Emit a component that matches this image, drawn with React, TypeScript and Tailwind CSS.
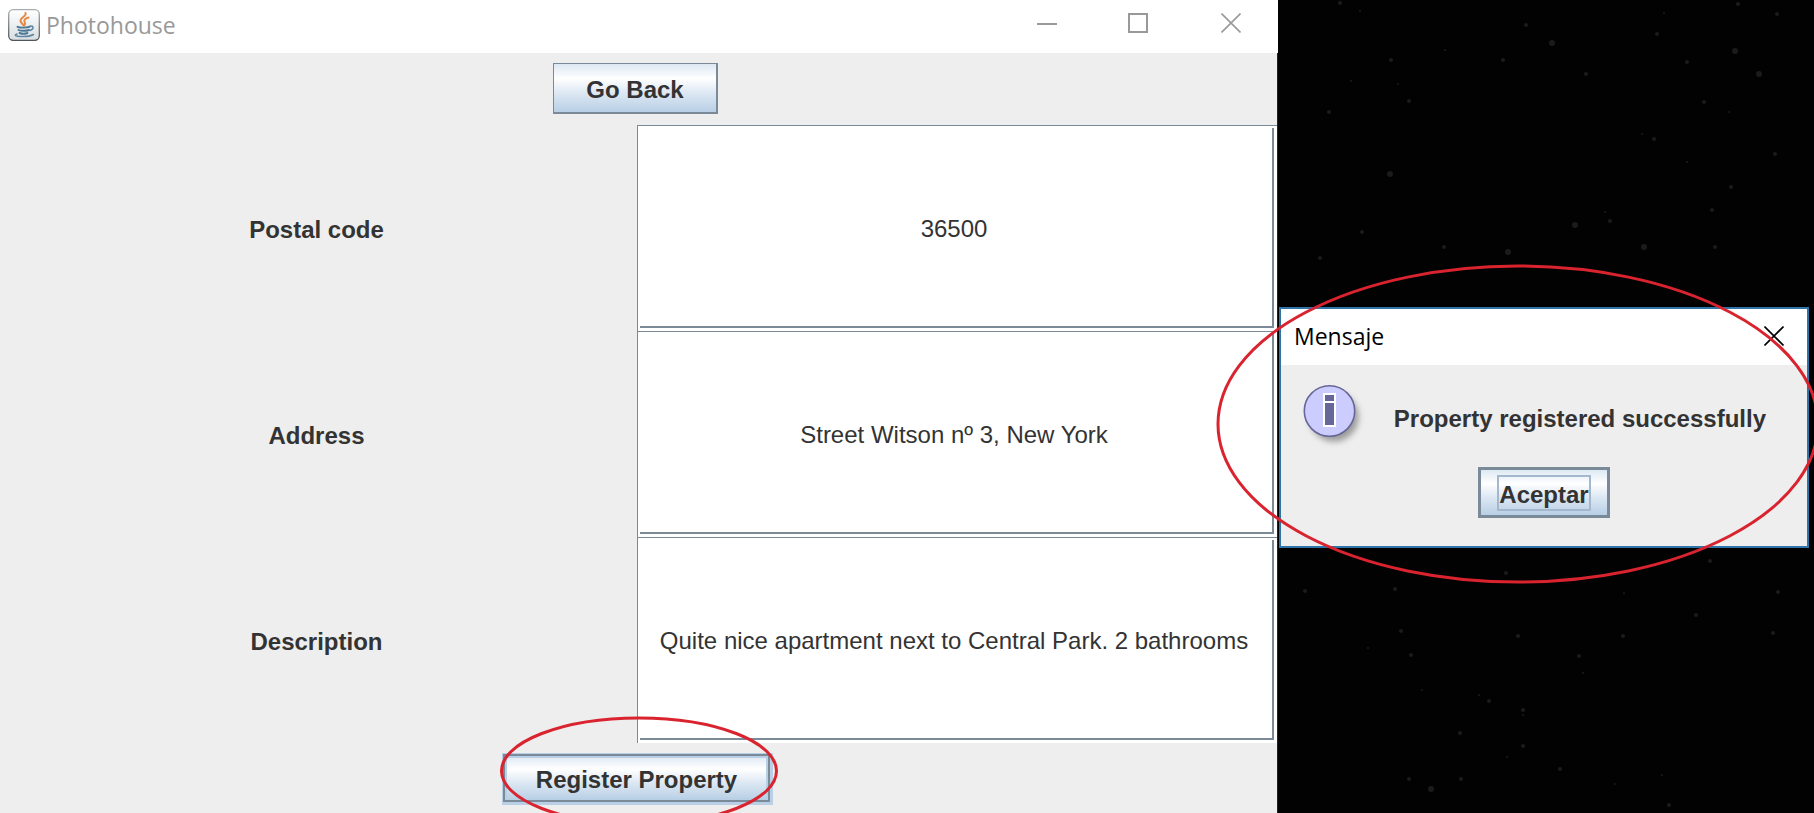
import React from "react";

const STARS: [number, number, number][] = [
  [62, 3, 2], [82, 11, 1], [248, 25, 2], [274, 43, 3], [167, 50, 1], [113, 60, 2], [225, 60, 2],
  [460, 4, 2], [386, 13, 1], [499, 14, 2], [379, 34, 2], [457, 51, 3], [409, 62, 2], [308, 74, 2],
  [481, 74, 3], [73, 81, 1], [120, 84, 1], [131, 101, 2], [51, 112, 2], [426, 102, 2], [451, 112, 1],
  [364, 134, 1], [376, 139, 2], [497, 154, 2], [409, 162, 1], [112, 174, 3], [453, 187, 2], [434, 210, 2],
  [297, 225, 3], [332, 221, 2], [327, 212, 1], [84, 232, 2], [366, 247, 3], [437, 247, 2], [230, 252, 3],
  [166, 247, 2], [42, 258, 2], [228, 573, 2], [432, 561, 2], [117, 589, 2], [27, 591, 2], [346, 593, 1],
  [500, 592, 2], [123, 631, 2], [133, 655, 2], [90, 648, 1], [240, 636, 2], [345, 636, 2], [495, 633, 2],
  [418, 615, 2], [301, 656, 2], [305, 673, 1], [144, 690, 1], [211, 701, 2], [201, 695, 1], [245, 710, 2],
  [245, 715, 1], [182, 733, 2], [245, 746, 2], [229, 757, 1], [282, 769, 2], [131, 779, 2], [183, 779, 2],
  [153, 789, 3], [391, 805, 2], [384, 775, 1], [337, 784, 1],
];

const STEEL_GRADIENT = "bg-[linear-gradient(to_bottom,#dde8f3_0%,#ffffff_30%,#dde8f3_60%,#b8cfe5_100%)]";

function JavaIcon() {
  return (
    <svg className="size-8 shrink-0" viewBox="0 0 32 32" fill="none" aria-hidden="true">
      <defs>
        <linearGradient id="tile" x1="0" y1="0" x2="0" y2="1">
          <stop offset="0" stopColor="#fff" />
          <stop offset="1" stopColor="#d9dee1" />
        </linearGradient>
        <linearGradient id="rim" x1="0" y1="0" x2="0" y2="1">
          <stop offset="0" stopColor="#a9adb0" />
          <stop offset="1" stopColor="#4c565c" />
        </linearGradient>
      </defs>
      <rect x="0.7" y="0.7" width="30.6" height="30.6" rx="4.5" fill="url(#tile)" stroke="url(#rim)" strokeWidth="1.3" />
      <path d="M17.500 4c1.500 3.200-5.500 4.500-5 8 .2 1.600 2.200 2.500 3 4.500M20.500 8.500c-3.500 1-5 2.500-3.800 4.500.8 1.400.6 2.200-.5 3.500" stroke="#e58a44" strokeWidth="2" strokeLinecap="round" />
      <path d="M9.500 17.800c2.500 1.200 10 1 12.500-.1M10.500 21c2 1.100 8 1 10.500 0M11.500 24c2 .8 6 .8 8 0" stroke="#4e7896" strokeWidth="1.900" strokeLinecap="round" />
      <path d="M22 17.200c4-1 4 3 0 4.300M9 25c-7 2.500 10 4 16.500.5" stroke="#5f86a2" strokeWidth="1.500" strokeLinecap="round" />
    </svg>
  );
}

function InfoIcon() {
  return (
    <svg className="size-16 shrink-0" viewBox="0 0 64 64" aria-hidden="true">
      <defs>
        <filter id="shade" x="-30%" y="-30%" width="160%" height="160%">
          <feGaussianBlur stdDeviation="3" />
        </filter>
      </defs>
      <circle cx="31" cy="32" r="24.500" fill="#777" opacity="0.7" filter="url(#shade)" />
      <circle cx="26.500" cy="26" r="25.200" fill="#ccccff" stroke="#666699" strokeWidth="1.600" />
      <path d="M21 9h11v32h-11z" fill="#666699" stroke="#fff" strokeWidth="2" />
      <path d="M21 17h11" stroke="#fff" strokeWidth="2" />
    </svg>
  );
}

function CloseIcon() {
  return (
    <svg className="size-5" viewBox="0 0 20 20" fill="none" stroke="currentColor" strokeWidth="1.600" aria-hidden="true">
      <path d="M0.500 0.500l19 19M19.500 0.500l-19 19" />
    </svg>
  );
}

function Field({ id, label, value }: { id: string; label: string; value: string }) {
  return (
    <div className="grid flex-1 grid-cols-[637fr_640fr]">
      <label htmlFor={id} className="flex items-center justify-center pt-1 pr-1 font-bold">
        {label}
      </label>
      <div className="flex border-t border-l border-[#7a8a99] bg-white pt-0.5 pr-[3px] pb-[3px] pl-0.5">
        <input
          id={id}
          defaultValue={value}
          className="w-full min-w-0 border-r-2 border-b-2 border-[#7a8a99] bg-white pt-1 pr-1 text-center outline-none"
        />
      </div>
    </div>
  );
}

function MainWindow() {
  return (
    <main className="flex min-h-screen w-[1278px] shrink-0 flex-col bg-[#eeeeee]">
      <header className="flex h-[53px] shrink-0 items-center bg-white pb-1 pl-2">
        <JavaIcon />
        <h1 className="ml-[6px] flex-1 font-['Open_Sans','Noto_Sans',sans-serif] text-[23px] text-[#999999]">Photohouse</h1>
        <div className="flex pb-1 text-[#999999]">
          <button aria-label="Minimize" className="flex h-11 w-[91px] items-center justify-center">
            <svg className="size-5" viewBox="0 0 20 20" stroke="currentColor" strokeWidth="2" aria-hidden="true">
              <path d="M0 11h20" />
            </svg>
          </button>
          <button aria-label="Maximize" className="flex h-11 w-[91px] items-center justify-center">
            <svg className="size-5" viewBox="0 0 20 20" fill="none" stroke="currentColor" strokeWidth="2" aria-hidden="true">
              <path d="M1 1h18v18h-18z" />
            </svg>
          </button>
          <button aria-label="Close" className="flex h-11 w-[95px] items-center justify-center">
            <CloseIcon />
          </button>
        </div>
      </header>
      <form className="flex flex-1 flex-col border-r border-[#222222]" onSubmit={(e) => e.preventDefault()}>
        <div className="flex h-[72px] items-center justify-center pr-1.5 pb-0.5">
          <button
            type="button"
            className={`h-[51px] border border-r-2 border-b-2 border-[#7a8a99] px-8 pt-1 font-bold ${STEEL_GRADIENT}`}
          >
            Go Back
          </button>
        </div>
        <div className="flex flex-1 flex-col">
          <Field id="postal" label="Postal code" value="36500" />
          <Field id="address" label="Address" value="Street Witson nº 3, New York" />
          <Field id="description" label="Description" value="Quite nice apartment next to Central Park. 2 bathrooms" />
        </div>
        <div className="flex h-[70px] items-center justify-center pr-1">
          <button
            type="submit"
            className={`h-12 border-2 border-[#7a8a99] px-[31px] pt-1 font-bold shadow-[1px_1px_0_2px_#b8cfe5,inset_0_0_0_2px_#b8cfe5] ${STEEL_GRADIENT}`}
          >
            Register Property
          </button>
        </div>
      </form>
    </main>
  );
}

function MessageDialog() {
  return (
    <section role="dialog" aria-labelledby="dialog-title" className="mr-[5px] ml-px border-2 border-[#2f74a8] bg-[#eeeeee]">
      <header className="flex h-14 items-center justify-between bg-white pr-[23px] pb-0.5 pl-[13px]">
        <h2 id="dialog-title" className="font-['Open_Sans','Noto_Sans',sans-serif] text-[23px] text-black">
          Mensaje
        </h2>
        <button aria-label="Close" className="text-black">
          <CloseIcon />
        </button>
      </header>
      <div className="flex justify-between pt-5 pr-[41px] pl-[22px]">
        <InfoIcon />
        <p className="pt-5 font-bold whitespace-nowrap">Property registered successfully</p>
      </div>
      <div className="flex justify-center pt-[18px] pb-7">
        <button className={`h-[51px] border-3 border-[#7a8a99] px-4 font-bold ${STEEL_GRADIENT}`}>
          <span className="flex h-9 items-center border-2 border-[#a3b8cc] pt-1">Aceptar</span>
        </button>
      </div>
    </section>
  );
}

function Desktop() {
  return (
    <aside className="relative flex min-w-0 flex-1 flex-col bg-[#020202] pt-[307px]">
      <svg className="absolute inset-0 h-full w-full" aria-hidden="true">
        {STARS.map(([x, y, r], i) => (
          <circle key={i} cx={x} cy={y} r={r} fill="#ffffff" opacity="0.1" />
        ))}
      </svg>
      <div className="relative">
        <MessageDialog />
      </div>
    </aside>
  );
}

export default function App() {
  return (
    <div className="relative flex min-h-screen overflow-hidden bg-black font-['Liberation_Sans',Arial,sans-serif] text-[24px] leading-7 text-[#333333]">
      <MainWindow />
      <Desktop />
      <svg className="pointer-events-none absolute inset-0 h-full w-full" fill="none" stroke="#d9232e" strokeWidth="3" aria-hidden="true">
        <ellipse cx="639" cy="771" rx="137.500" ry="53" />
        <ellipse cx="1518" cy="424" rx="300" ry="158" />
      </svg>
    </div>
  );
}
